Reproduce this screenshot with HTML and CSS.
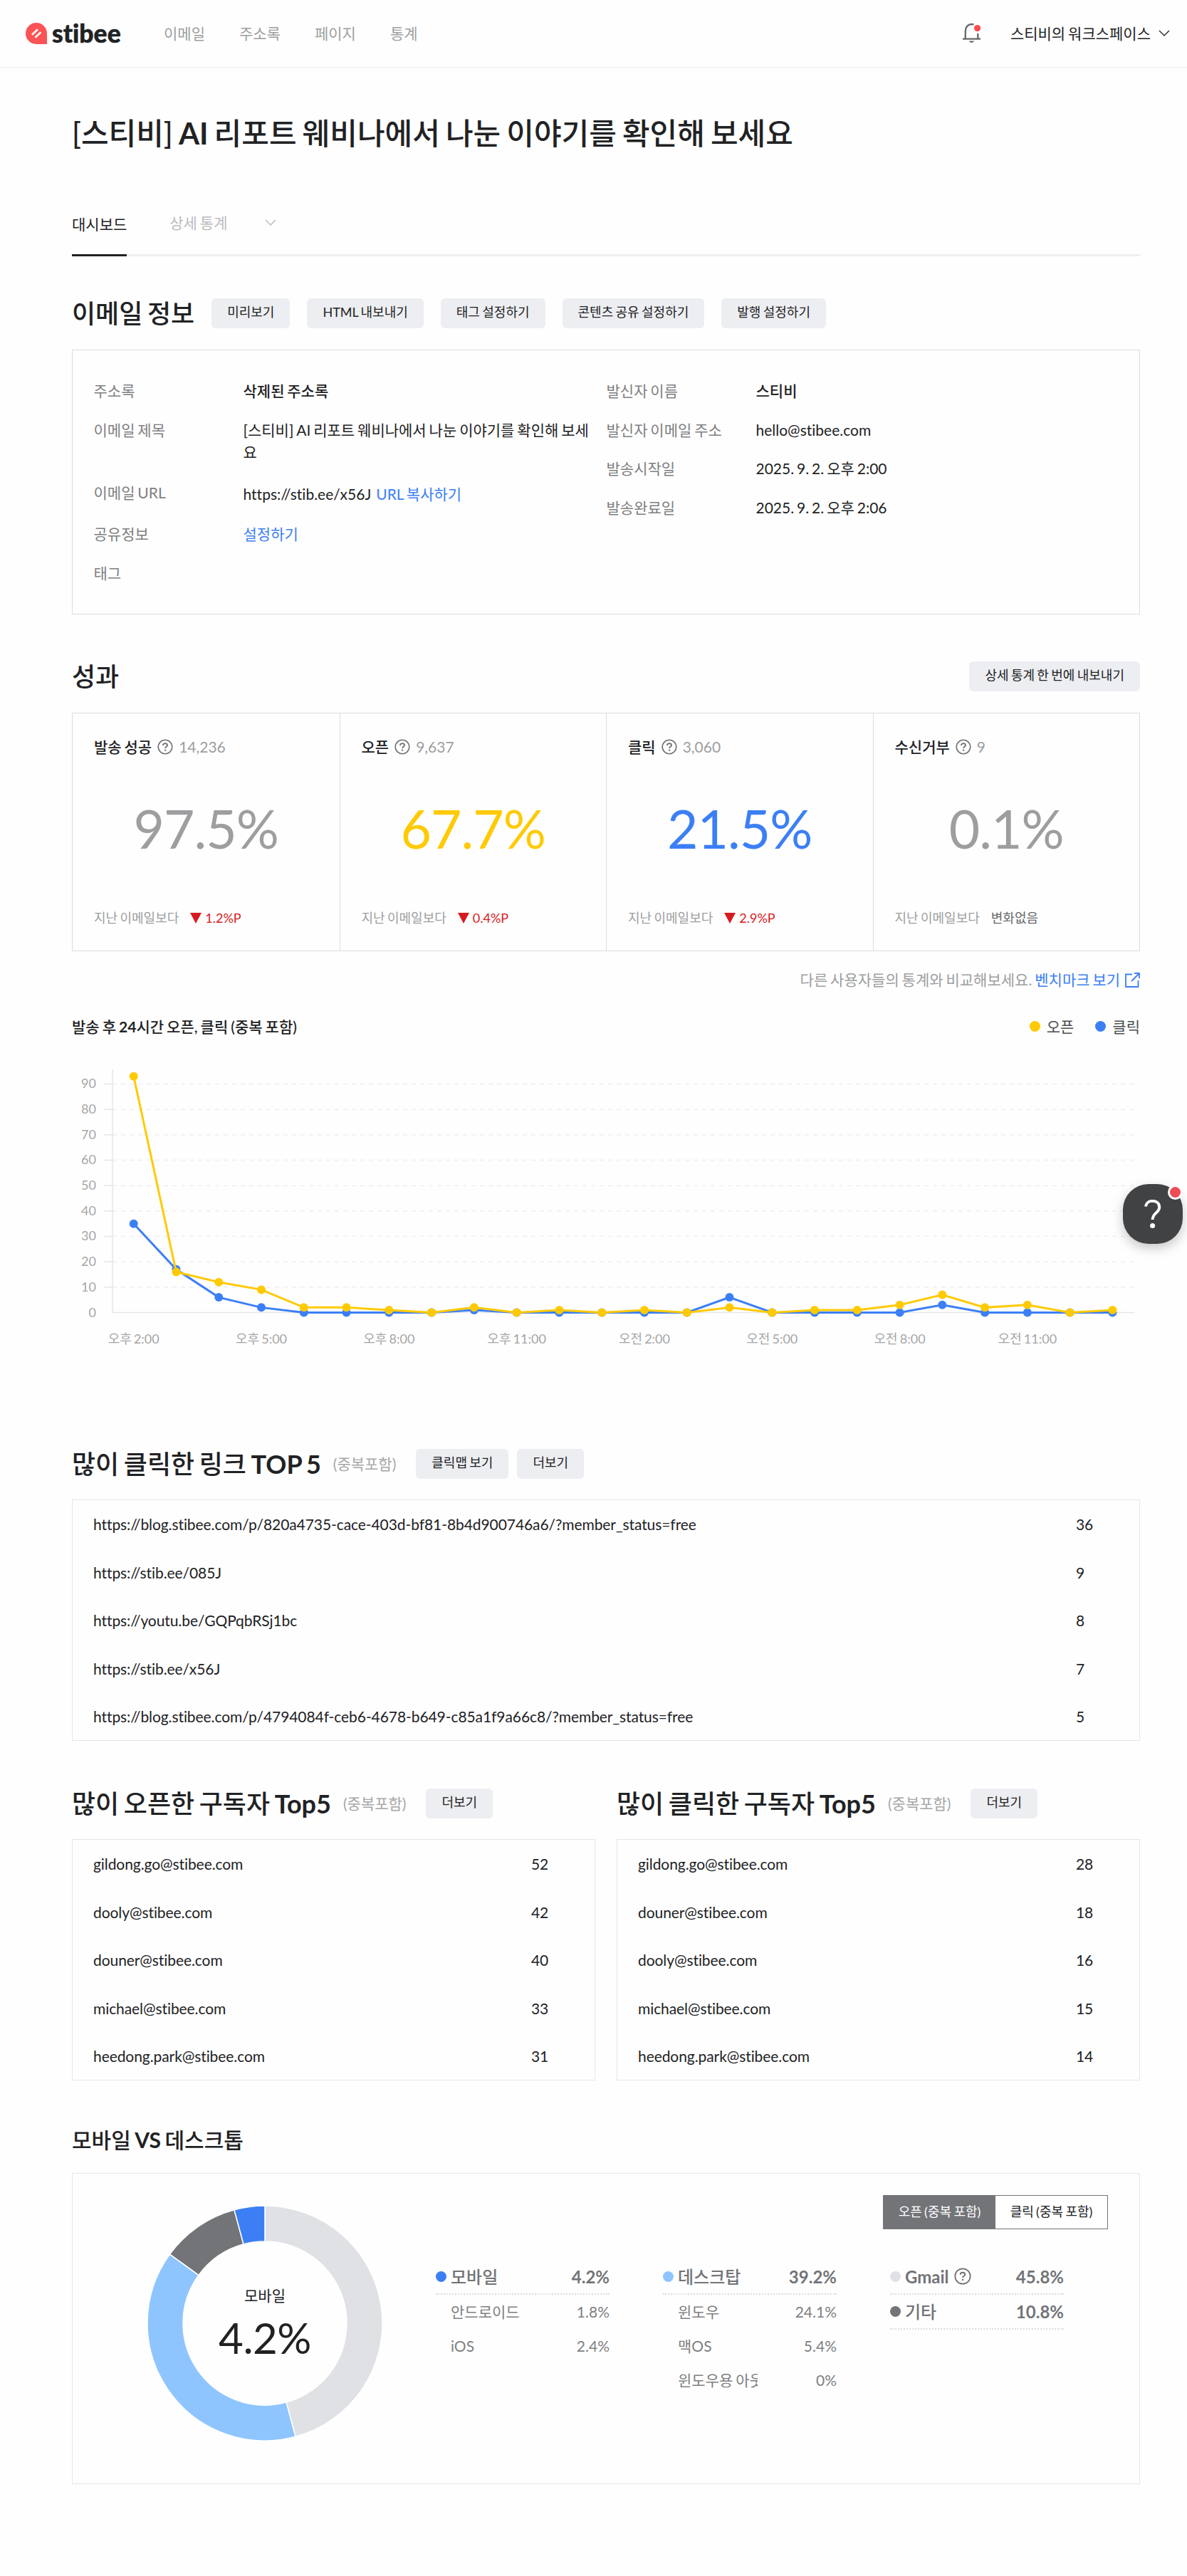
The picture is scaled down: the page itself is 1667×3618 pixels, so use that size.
FILE: index.html
```html
<!DOCTYPE html>
<html lang="ko">

<head>
    <meta charset="UTF-8">
    <meta name="viewport" content="width=device-width, initial-scale=1.0">
    <title>스티비</title>
    <link rel="stylesheet" href="styles.css">
</head>

<body>
    <svg class="defs">
        <symbol id="help" viewBox="0 0 22 22">
            <circle cx="11" cy="11" r="9.8" fill="none" stroke="currentColor" stroke-width="1.6" />
            <path d="M8 8.9C8 7.2 9.2 6.2 11 6.2s3 1 3 2.5c0 2-2.9 2-2.9 4.2" fill="none" stroke="currentColor" stroke-width="1.8" />
            <circle cx="11.1" cy="15.6" r="1.2" fill="currentColor" />
        </symbol>
    </svg>

    <header class="header">
        <a class="logo">
            <svg width="30" height="30" viewBox="0 0 30 30">
                <path d="M15 0a15 15 0 0 1 15 15v15H15a15 15 0 0 1 0-30z" fill="#fc5356" />
                <path d="M9 16.8l8-7.6M13.4 20.8l8-7.6" stroke="#fff" stroke-width="2.6" />
            </svg>
            <span>stibee</span>
        </a>
        <nav class="nav">
            <a>이메일</a>
            <a>주소록</a>
            <a>페이지</a>
            <a>통계</a>
        </nav>
        <div class="account">
            <svg width="26" height="30" viewBox="0 0 26 30">
                <path d="M0 22.6h25M3.8 22V11.5C3.8 5.8 7.6 2 12.6 2c1 0 2 .2 3 .5M21.3 15v7" fill="none" stroke="#66686b" stroke-width="2.3" />
                <path d="M8.8 25.5h7.4a3.8 3.2 0 0 1-7.4 0z" fill="#66686b" />
                <circle cx="20.6" cy="7.6" r="4.6" fill="#fc4c50" />
            </svg>
            <span class="workspace">스티비의 워크스페이스</span>
            <svg width="16" height="10" viewBox="0 0 16 10"><path d="M1 1l7 7 7-7" fill="none" stroke="#333" stroke-width="1.5" /></svg>
        </div>
    </header>

    <main class="container">
        <h1 class="title">[스티비] <b>AI</b> 리포트 웨비나에서 나눈 이야기를 확인해 보세요</h1>

        <div class="tabs">
            <a class="tab active">대시보드</a>
            <a class="tab">상세 통계
                <svg width="16" height="10" viewBox="0 0 16 10"><path d="M1 1l7 7 7-7" fill="none" stroke="#bbb" stroke-width="1.5" /></svg>
            </a>
        </div>

        <div class="section-head info-head">
            <h2>이메일 정보</h2>
            <div class="buttons">
                <button class="btn">미리보기</button>
                <button class="btn">HTML 내보내기</button>
                <button class="btn">태그 설정하기</button>
                <button class="btn">콘텐츠 공유 설정하기</button>
                <button class="btn">발행 설정하기</button>
            </div>
        </div>

        <div class="info box">
            <dl>
                <dt>주소록</dt>
                <dd class="strong">삭제된 주소록</dd>
                <dt>이메일 제목</dt>
                <dd class="subject">[스티비] AI 리포트 웨비나에서 나눈 이야기를 확인해 보세요</dd>
                <dt>이메일 URL</dt>
                <dd class="url">https://stib.ee/x56J <a class="link">URL 복사하기</a></dd>
                <dt>공유정보</dt>
                <dd><a class="link">설정하기</a></dd>
                <dt>태그</dt>
                <dd></dd>
            </dl>
            <dl>
                <dt>발신자 이름</dt>
                <dd class="strong">스티비</dd>
                <dt>발신자 이메일 주소</dt>
                <dd>hello@stibee.com</dd>
                <dt>발송시작일</dt>
                <dd>2025. 9. 2. 오후 2:00</dd>
                <dt>발송완료일</dt>
                <dd>2025. 9. 2. 오후 2:06</dd>
            </dl>
        </div>

        <div class="section-head result-head">
            <h2>성과</h2>
            <button class="btn">상세 통계 한 번에 내보내기</button>
        </div>

        <div class="stats box">
            <div class="stat">
                <div class="stat-name">발송 성공 <svg class="help"><use href="#help" /></svg> <span>14,236</span></div>
                <div class="stat-value">97.5%</div>
                <div class="stat-diff">지난 이메일보다 <span class="down">1.2%P</span></div>
            </div>
            <div class="stat">
                <div class="stat-name">오픈 <svg class="help"><use href="#help" /></svg> <span>9,637</span></div>
                <div class="stat-value yellow">67.7%</div>
                <div class="stat-diff">지난 이메일보다 <span class="down">0.4%P</span></div>
            </div>
            <div class="stat">
                <div class="stat-name">클릭 <svg class="help"><use href="#help" /></svg> <span>3,060</span></div>
                <div class="stat-value blue">21.5%</div>
                <div class="stat-diff">지난 이메일보다 <span class="down">2.9%P</span></div>
            </div>
            <div class="stat">
                <div class="stat-name">수신거부 <svg class="help"><use href="#help" /></svg> <span>9</span></div>
                <div class="stat-value">0.1%</div>
                <div class="stat-diff">지난 이메일보다 <span class="same">변화없음</span></div>
            </div>
        </div>

        <p class="benchmark">다른 사용자들의 통계와 비교해보세요. <a class="link">벤치마크 보기
            <svg width="21" height="21" viewBox="0 0 21 21"><path d="M10 2.5H1v17.5h17.5V11M13 1h7v7M19.5 1.5L9 12" fill="none" stroke="#3c7ff5" stroke-width="1.8" /></svg></a></p>

        <div class="chart-head">
            <h3>발송 후 <b>24</b>시간 오픈, 클릭 (중복 포함)</h3>
            <div class="chart-legend">
                <span><i class="dot bg-yellow"></i>오픈</span>
                <span><i class="dot bg-blue"></i>클릭</span>
            </div>
        </div>
        <svg id="chart" class="chart" width="1500" height="420" viewBox="0 0 1500 420"></svg>

        <div class="section-head links-head">
            <h2>많이 클릭한 링크 <b>TOP 5</b></h2>
            <span class="note">(중복포함)</span>
            <div class="buttons tight">
                <button class="btn">클릭맵 보기</button>
                <button class="btn">더보기</button>
            </div>
        </div>
        <ul class="list box">
            <li><span>https://blog.stibee.com/p/820a4735-cace-403d-bf81-8b4d900746a6/?member_status=free</span><b>36</b></li>
            <li><span>https://stib.ee/085J</span><b>9</b></li>
            <li><span>https://youtu.be/GQPqbRSj1bc</span><b>8</b></li>
            <li><span>https://stib.ee/x56J</span><b>7</b></li>
            <li><span>https://blog.stibee.com/p/4794084f-ceb6-4678-b649-c85a1f9a66c8/?member_status=free</span><b>5</b></li>
        </ul>

        <div class="columns">
            <section>
                <div class="section-head">
                    <h2>많이 오픈한 구독자 <b>Top5</b></h2>
                    <span class="note">(중복포함)</span>
                    <button class="btn">더보기</button>
                </div>
                <ul class="list box">
                    <li><span>gildong.go@stibee.com</span><b>52</b></li>
                    <li><span>dooly@stibee.com</span><b>42</b></li>
                    <li><span>douner@stibee.com</span><b>40</b></li>
                    <li><span>michael@stibee.com</span><b>33</b></li>
                    <li><span>heedong.park@stibee.com</span><b>31</b></li>
                </ul>
            </section>
            <section>
                <div class="section-head">
                    <h2>많이 클릭한 구독자 <b>Top5</b></h2>
                    <span class="note">(중복포함)</span>
                    <button class="btn">더보기</button>
                </div>
                <ul class="list box">
                    <li><span>gildong.go@stibee.com</span><b>28</b></li>
                    <li><span>douner@stibee.com</span><b>18</b></li>
                    <li><span>dooly@stibee.com</span><b>16</b></li>
                    <li><span>michael@stibee.com</span><b>15</b></li>
                    <li><span>heedong.park@stibee.com</span><b>14</b></li>
                </ul>
            </section>
        </div>

        <h2 class="device-title">모바일 <b>VS</b> 데스크톱</h2>
        <div class="device box">
            <svg id="donut" class="donut" width="332" height="332" viewBox="-166 -166 332 332">
                <text class="donut-name" y="-31">모바일</text>
                <text class="donut-value" y="43">4.2%</text>
            </svg>
            <div class="device-right">
                <div class="toggle">
                    <button class="on">오픈 (중복 포함)</button>
                    <button>클릭 (중복 포함)</button>
                </div>
                <div class="groups">
                    <div class="group">
                        <div class="group-head"><i class="dot bg-blue"></i>모바일<em>4.2%</em></div>
                        <div class="group-row"><span>안드로이드</span><em>1.8%</em></div>
                        <div class="group-row"><span>iOS</span><em>2.4%</em></div>
                    </div>
                    <div class="group">
                        <div class="group-head"><i class="dot bg-sky"></i>데스크탑<em>39.2%</em></div>
                        <div class="group-row"><span>윈도우</span><em>24.1%</em></div>
                        <div class="group-row"><span>맥OS</span><em>5.4%</em></div>
                        <div class="group-row"><span>윈도우용 아웃룩</span><em>0%</em></div>
                    </div>
                    <div class="group">
                        <div class="group-head"><i class="dot bg-light"></i><b>Gmail</b><svg class="help"><use href="#help" /></svg><em>45.8%</em></div>
                        <div class="group-head"><i class="dot bg-dark"></i>기타<em>10.8%</em></div>
                    </div>
                </div>
            </div>
        </div>
    </main>

    <button class="chat">
        <svg width="24" height="42" viewBox="0 0 24 42">
            <path d="M2 9.5C2.6 4.6 6.6 1.8 11.6 1.8c5.8 0 9.6 3.4 9.6 8.6 0 7.8-9.6 8.4-9.6 17.6" fill="none" stroke="#fff" stroke-width="4" />
            <circle cx="11.6" cy="36.6" r="3.5" fill="#fff" />
        </svg>
        <i class="badge"></i>
    </button>

    <script src="script.js"></script>
</body>

</html>
```

FILE: styles.css
```css
* {
    box-sizing: border-box;
}

body {
    margin: 0;
    position: relative;
    min-height: 3618px;
    background-color: #fefefe;
    color: #212224;
    font-family: Lato, "Noto Sans CJK KR", sans-serif;
    font-size: 21px;
    line-height: 31.5px;
    font-variant-ligatures: none;
}

h1, h2, h3, p, ul, dl, dd {
    margin: 0;
    padding: 0;
}

/* word-spacing in em has to be set on each size */
body, h2, button, .stat-diff {
    word-spacing: -0.07em;
}

h1, h3 {
    word-spacing: -0.06em;
}

button {
    font-family: inherit;
    color: inherit;
    border: 0;
}

b {
    font-weight: 700;
}

em {
    font-style: normal;
}

.defs {
    display: none;
}

.header {
    height: 96px;
    padding: 0 24px 0 36px;
    border-bottom: 2px solid #f4f4f5;
    display: flex;
    align-items: center;
}

.logo {
    display: flex;
    align-items: center;
    gap: 7px;
    width: 194px;
    font-size: 35.5px;
    font-weight: 900;
    -webkit-text-stroke: 0.5px #212224;
}

.nav {
    display: flex;
    gap: 48px;
    color: #9d9ea0;
}

.account {
    display: flex;
    align-items: center;
    margin-left: auto;
}

.workspace {
    margin: 0 11px 0 41px;
}

.container {
    width: 1500px;
    margin: 0 auto 0 101px;
}

.title {
    padding-top: 61px;
    font-size: 42px;
    line-height: 60px;
    font-weight: 500;
}

.tabs {
    display: flex;
    gap: 60px;
    height: 63px;
    margin-top: 80px;
    border-bottom: 3px solid #efeff0;
}

.tab {
    color: #bbbcbe;
    height: 63px;
}

.tab svg {
    margin-left: 49px;
    vertical-align: 3px;
}

.tab.active {
    padding-top: 2px;
    border-bottom: 3px solid #212224;
    color: #212224;
}

.section-head {
    display: flex;
    align-items: center;
    height: 42px;
}

.section-head h2 {
    font-size: 36px;
    line-height: 42px;
    font-weight: 500;
}

.buttons {
    display: flex;
    gap: 24px;
    margin-left: 24px;
}

.btn {
    height: 42px;
    padding: 0 22px;
    border-radius: 6px;
    background-color: #edeef1;
    font-size: 18px;
    line-height: 38px;
    padding-bottom: 4px;
}

.box {
    border: 1px solid #dcddde;
}

.info-head {
    margin-top: 59px;
}

.info {
    display: flex;
    height: 372px;
    margin-top: 30px;
    padding: 41px 30px 0 29.5px;
}

.info dl {
    display: grid;
    grid-template-columns: 210px 495px;
    align-content: start;
    row-gap: 23px;
    margin-right: 15px;
}

.info dt {
    color: #7f8082;
}

.info .subject {
    padding-bottom: 2px;
}

.info .url {
    padding-top: 2px;
    padding-bottom: 2px;
}

.url .link {
    margin-left: 3px;
}

.strong {
    font-weight: 500;
}

.link {
    color: #3c7ff5;
}

.result-head {
    margin-top: 66px;
    justify-content: space-between;
}

.stats {
    display: grid;
    grid-template-columns: repeat(4, 1fr);
    height: 335px;
    margin-top: 30px;
}

.stat {
    padding: 31px 30px 0;
    border-left: 1px solid #dcddde;
}

.stat:first-child {
    border-left: 0;
}

.stat-name {
    display: flex;
    align-items: center;
    gap: 8px;
    font-weight: 500;
}

.stat-name span {
    color: #9d9ea0;
    font-weight: 400;
}

.help {
    width: 22px;
    height: 22px;
    color: #6f7073;
}

.stat-value {
    margin-top: 50px;
    font-size: 75px;
    line-height: 96px;
    letter-spacing: -1px;
    text-align: center;
    color: #9d9ea0;
}

.stat-value.yellow {
    color: #ffca05;
}

.stat-value.blue {
    color: #3c7ff5;
}

.stat-diff {
    display: flex;
    align-items: center;
    gap: 16px;
    margin-top: 63px;
    font-size: 18px;
    color: #9d9ea0;
}

.down {
    display: flex;
    align-items: center;
    gap: 5px;
    color: #d71920;
}

.down::before {
    content: "";
    border: 8.5px solid transparent;
    border-top: 15px solid #d71920;
    border-bottom: 0;
}

.same {
    color: #66686b;
}

.benchmark {
    margin-top: 24px;
    text-align: right;
    color: #9d9ea0;
}

.benchmark svg {
    vertical-align: -3px;
    margin-left: 3px;
}

.chart-head {
    display: flex;
    align-items: center;
    justify-content: space-between;
    margin-top: 34px;
}

.chart-head h3 {
    font-size: 21px;
    font-weight: 500;
}

.chart-legend {
    display: flex;
    gap: 30px;
    color: #4c4d50;
}

.chart-legend span {
    display: flex;
    align-items: center;
    gap: 9px;
}

.dot {
    width: 15px;
    height: 15px;
    border-radius: 50%;
}

.bg-yellow { background-color: #ffca05; }
.bg-blue { background-color: #3c7ff5; }
.bg-sky { background-color: #8ec5ff; }
.bg-light { background-color: #dfe1e5; }
.bg-dark { background-color: #727478; }

.chart {
    display: block;
    margin-top: 13px;
}

.chart text {
    font-size: 18px;
    fill: #a5a6a8;
}

.grid-line {
    stroke: #f1f1f2;
    stroke-width: 2;
    stroke-dasharray: 6 6;
}

.tick, .axis {
    stroke: #e6e6e8;
    stroke-width: 1.5;
}

.links-head {
    margin-top: 145px;
}

.note {
    margin-left: 17px;
    color: #a5a6a8;
}

.note + .buttons,
.note + .btn {
    margin-left: 28px;
}

.buttons.tight {
    gap: 12px;
}

.list {
    list-style: none;
    margin-top: 29px;
    border-color: #e6e6e8;
}

.list li {
    display: flex;
    align-items: center;
    justify-content: space-between;
    height: 67.4px;
    padding: 1px 29px 0 29px;
    letter-spacing: -0.08px;
}

.list b {
    width: 60px;
    font-weight: 400;
}

.columns {
    display: grid;
    grid-template-columns: 735px 735px;
    gap: 30px;
    margin-top: 67px;
}

.device-title {
    margin-top: 66px;
    font-size: 30px;
    line-height: 34px;
    font-weight: 500;
}

.device {
    display: flex;
    height: 437px;
    margin-top: 30px;
    border-color: #e6e6e8;
}

.donut {
    margin: 44px 0 0 104px;
}

.donut text {
    text-anchor: middle;
    fill: #212224;
}

.donut-name {
    font-size: 21px;
}

.donut-value {
    font-size: 60px;
    letter-spacing: -0.5px;
}

.device-right {
    margin-left: 74px;
    padding-top: 30px;
}

.toggle {
    display: flex;
    width: 316px;
    height: 48px;
    margin-left: 628px;
    border: 1.5px solid #727478;
}

.toggle button {
    width: 50%;
    padding: 0 0 3px;
    background-color: #fff;
    font-size: 18px;
}

.toggle .on {
    background-color: #727478;
    color: #fff;
}

.groups {
    display: flex;
    gap: 75px;
    margin-top: 43px;
    color: #7f8082;
}

.group {
    width: 244px;
}

.group-head {
    display: flex;
    align-items: center;
    height: 49px;
    border-bottom: 2px dotted #dcddde;
    font-size: 24px;
    font-weight: 500;
    color: #727478;
}

.group-head .dot {
    margin-right: 6px;
}

.group-head .help {
    width: 24px;
    height: 24px;
    margin-left: 7px;
}

.group-head em {
    margin-left: auto;
    font-weight: 700;
}

.group-row {
    display: flex;
    justify-content: space-between;
    align-items: center;
    height: 48px;
    padding-left: 21px;
}

.group-row span {
    width: 112px;
    overflow: hidden;
    white-space: nowrap;
}

.chat {
    position: absolute;
    left: 1577px;
    top: 1663px;
    width: 84px;
    height: 84px;
    padding: 4px 0 0;
    border-radius: 36px;
    background-color: #404244;
    box-shadow: 0 6px 16px rgba(0, 0, 0, 0.22);
}

.badge {
    position: absolute;
    right: 0;
    top: 1px;
    width: 21px;
    height: 21px;
    border: 3px solid #fff;
    border-radius: 50%;
    background-color: #ee4c57;
}
```

FILE: script.js
```js
const SVG = 'http://www.w3.org/2000/svg';

function add(parent, tag, attrs, text) {
    const el = document.createElementNS(SVG, tag);
    for (const key in attrs) el.setAttribute(key, attrs[key]);
    if (text !== undefined) el.textContent = text;
    parent.appendChild(el);
    return el;
}

// 24시간 오픈, 클릭
const opens = [93, 16, 12, 9, 2, 2, 1, 0, 2, 0, 1, 0, 1, 0, 2, 0, 1, 1, 3, 7, 2, 3, 0, 1];
const clicks = [35, 17, 6, 2, 0, 0, 0, 0, 1, 0, 0, 0, 0, 0, 6, 0, 0, 0, 0, 3, 0, 0, 0, 0];
const times = ['오후 2:00', '오후 5:00', '오후 8:00', '오후 11:00', '오전 2:00', '오전 5:00', '오전 8:00', '오전 11:00'];

const chart = document.getElementById('chart');
const x = i => 86.7 + i * 59.77;
const y = v => 373.5 - v * 3.567;

for (let v = 0; v <= 90; v += 10) {
    if (v > 0) {
        add(chart, 'line', { class: 'tick', x1: 45, x2: 57, y1: y(v), y2: y(v) });
        add(chart, 'line', { class: 'grid-line', x1: 57, x2: 1492, y1: y(v), y2: y(v) });
    }
    add(chart, 'text', { x: 34, y: y(v) + 6, 'text-anchor': 'end' }, v);
}
add(chart, 'line', { class: 'axis', x1: 57, x2: 57, y1: 32, y2: y(0) });
add(chart, 'line', { class: 'axis', x1: 57, x2: 1492, y1: y(0), y2: y(0) });

times.forEach((t, i) => add(chart, 'text', { x: x(i * 3), y: 417, 'text-anchor': 'middle' }, t));

[[clicks, '#3c7ff5'], [opens, '#ffca05']].forEach(([data, color]) => {
    add(chart, 'polyline', {
        points: data.map((v, i) => x(i) + ',' + y(v)).join(' '),
        fill: 'none', stroke: color, 'stroke-width': 3
    });
    data.forEach((v, i) => add(chart, 'circle', { cx: x(i), cy: y(v), r: 6, fill: color }));
});

// 모바일 VS 데스크톱
const donut = document.getElementById('donut');
const parts = [[45.8, '#dfe1e5'], [39.2, '#8ec5ff'], [10.8, '#727478'], [4.2, '#3c7ff5']];
let start = 0;

function point(r, p) {
    const a = p / 100 * Math.PI * 2;
    return (r * Math.sin(a)).toFixed(2) + ' ' + (-r * Math.cos(a)).toFixed(2);
}

parts.forEach(([size, color]) => {
    const end = start + size;
    add(donut, 'path', {
        d: `M${point(165, start)}A165 165 0 0 1 ${point(165, end)}L${point(115, end)}A115 115 0 0 0 ${point(115, start)}Z`,
        fill: color, stroke: '#fff', 'stroke-width': 1.5
    });
    start = end;
});
```
